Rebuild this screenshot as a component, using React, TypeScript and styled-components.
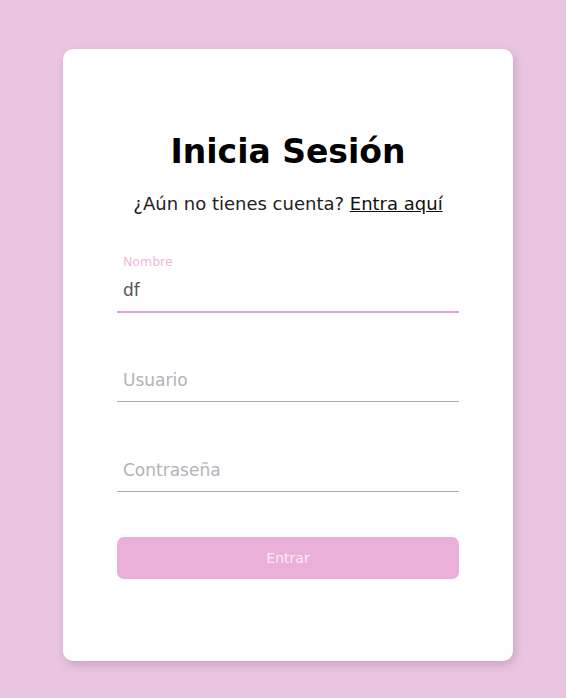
import { useState } from "react";
import styled, { createGlobalStyle } from "styled-components";

const GlobalStyle = createGlobalStyle`
  html, body {
    margin: 0;
    padding: 0;
    background-color: #e9c5e1;
    font-family: "DejaVu Sans", "Open Sans", sans-serif;
  }
`;

const Page = styled.div`
  box-sizing: border-box;
  display: flex;
  justify-content: center;
  min-height: 698px;
  padding: 49px 0 37px 10px;
`;

const Card = styled.form`
  background-color: #fff;
  border-radius: 10px;
  box-shadow: 2px 4px 8px rgba(120, 70, 110, 0.25);
  box-sizing: border-box;
  display: flex;
  flex-direction: column;
  height: 612px;
  padding: 81px 54px 0;
  width: 450px;
`;

const Title = styled.h1`
  color: #000;
  font-size: 33px;
  font-weight: 700;
  line-height: 44px;
  margin: 0;
  text-align: center;
`;

const Subtitle = styled.p`
  color: #222;
  font-size: 18px;
  line-height: 24px;
  margin: 18px 0 0;
  text-align: center;

  a {
    color: #111;
    text-decoration: underline;
  }
`;

const Fields = styled.div`
  display: flex;
  flex-direction: column;
  gap: 29px;
  margin-top: 37px;
`;

const Field = styled.label<{ $active?: boolean }>`
  border-bottom: ${({ $active }) => ($active ? "2px solid #e4a4cf" : "1px solid #aaa")};
  display: flex;
  flex-direction: column;
  height: ${({ $active }) => ($active ? "58px" : "59px")};
  justify-content: flex-end;
  position: relative;

  & + & + & {
    margin-top: 1px;
  }
`;

const FieldLabel = styled.span`
  color: #f1b7dc;
  font-size: 12.5px;
  left: 6px;
  line-height: 14px;
  position: absolute;
  top: 2px;
`;

const Input = styled.input`
  background: transparent;
  border: none;
  box-sizing: border-box;
  color: #555;
  font-family: inherit;
  font-size: 17px;
  height: 38px;
  outline: none;
  padding: 0 6px 4px;
  width: 100%;

  &::placeholder {
    color: #b2b3ba;
  }
`;

const SubmitButton = styled.button`
  background-color: #eab0d9;
  border: none;
  border-radius: 7px;
  color: #fbeaf6;
  font-family: inherit;
  font-size: 14px;
  height: 42px;
  margin-top: 45px;
  width: 100%;
`;

const App = () => {
  const [nombre, setNombre] = useState("df");

  return (
    <>
      <GlobalStyle />
      <Page>
        <Card onSubmit={(e) => e.preventDefault()}>
          <Title>Inicia Sesión</Title>
          <Subtitle>
            ¿Aún no tienes cuenta? <a href="#">Entra aquí</a>
          </Subtitle>
          <Fields>
            <Field $active>
              <FieldLabel>Nombre</FieldLabel>
              <Input value={nombre} onChange={(e) => setNombre(e.target.value)} />
            </Field>
            <Field>
              <Input placeholder="Usuario" />
            </Field>
            <Field>
              <Input type="password" placeholder="Contraseña" />
            </Field>
          </Fields>
          <SubmitButton type="submit">Entrar</SubmitButton>
        </Card>
      </Page>
    </>
  );
};

export default App;
